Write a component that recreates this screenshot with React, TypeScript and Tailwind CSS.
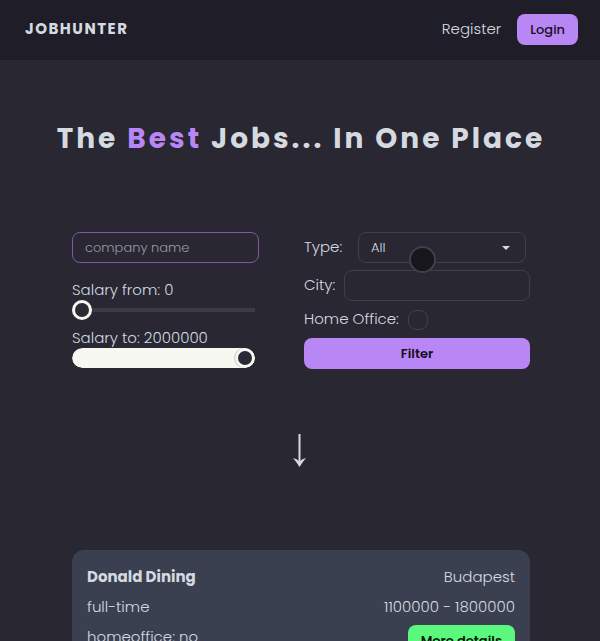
import { useState } from "react";

const field =
  "h-[31px] rounded-lg border bg-transparent px-3 font-light outline-none";

const range =
  "block h-5 w-full appearance-none rounded-full bg-transparent outline-none [&::-webkit-slider-thumb]:box-border [&::-webkit-slider-thumb]:size-5 [&::-webkit-slider-thumb]:appearance-none [&::-webkit-slider-thumb]:rounded-full [&::-webkit-slider-thumb]:border-3 [&::-webkit-slider-thumb]:border-[#f8f8f2] [&::-webkit-slider-thumb]:bg-[#282a36]";

const slimTrack =
  "[&::-webkit-slider-runnable-track]:h-1 [&::-webkit-slider-runnable-track]:bg-[#3b3a45] [&::-webkit-slider-thumb]:-mt-2";

const fullTrack =
  "overflow-hidden [&::-webkit-slider-runnable-track]:h-5 [&::-webkit-slider-runnable-track]:rounded-full [&::-webkit-slider-runnable-track]:bg-[#f8f8f2] [&::-webkit-slider-thumb]:shadow-[-1px_0_0_0_#c4c5c6]";

const MAX = 2000000;

function Header() {
  return (
    <header className="flex h-[60px] items-center justify-between bg-[#1f1e28] pr-[22px] pb-px pl-[25px]">
      <a href="#home" className="font-bold tracking-widest">
        JOBHUNTER
      </a>
      <nav className="flex items-center gap-4">
        <a href="#register" className="font-light">
          Register
        </a>
        <button className="h-[31px] rounded-lg bg-[#b987f5] px-[13px] text-[13px] font-medium text-[#160f1e]">
          Login
        </button>
      </nav>
    </header>
  );
}

function Filters() {
  const [from, setFrom] = useState(0);
  const [to, setTo] = useState(MAX);

  return (
    <form
      className="flex justify-between font-light"
      onSubmit={(e) => e.preventDefault()}
    >
      <div className="w-[187px]">
        <input
          type="text"
          aria-label="company name"
          placeholder="company name"
          className={`${field} block w-full border-[#7e58a8] text-[13px] placeholder:text-[#9a9ca7]`}
        />
        <div className="mt-4 w-[183px]">
          <label htmlFor="from" className="block leading-[21px]">
            Salary from: {from}
          </label>
          <input
            id="from"
            type="range"
            min={0}
            max={MAX}
            value={from}
            onChange={(e) => setFrom(Number(e.target.value))}
            className={`${range} ${slimTrack}`}
          />
          <label htmlFor="to" className="mt-[7px] block leading-[21px]">
            Salary to: {to}
          </label>
          <input
            id="to"
            type="range"
            min={0}
            max={MAX}
            value={to}
            onChange={(e) => setTo(Number(e.target.value))}
            className={`${range} ${fullTrack}`}
          />
        </div>
      </div>

      <div className="flex w-[226px] flex-col">
        <div className="flex items-center justify-between pr-1">
          <label htmlFor="type">Type:</label>
          <div className="relative">
            <select
              id="type"
              className={`${field} block w-[168px] appearance-none border-[#403f4b] text-[13px]`}
            >
              <option>All</option>
            </select>
            <svg
              viewBox="0 0 8 4"
              className="pointer-events-none absolute top-3.5 right-4 h-1 w-2 fill-current"
            >
              <path d="M0 0h8L4 4z" />
            </svg>
            <span className="pointer-events-none absolute top-3.5 left-[51px] size-[27px] rounded-full border-2 border-[#403f4a] bg-[#17161c]" />
          </div>
        </div>
        <div className="mt-[7px] flex items-center justify-between">
          <label htmlFor="city">City:</label>
          <input
            id="city"
            type="text"
            className={`${field} w-[186px] border-[#403f4b] text-[13px]`}
          />
        </div>
        <div className="mt-[7px] flex h-[23px] items-center gap-[9px]">
          <label htmlFor="office">Home Office:</label>
          <input
            id="office"
            type="checkbox"
            className="size-5 appearance-none rounded-lg border border-[#403f4b] checked:bg-[#b987f5]"
          />
        </div>
        <button className="mt-[7px] h-[31px] rounded-lg bg-[#b987f5] text-[13px] font-semibold text-[#160f1e]">
          Filter
        </button>
      </div>
    </form>
  );
}

function JobCard() {
  return (
    <article className="rounded-xl bg-[#3a4050] px-[15px] pt-[15px] pb-4 font-light">
      <div className="flex h-6 items-center justify-between">
        <h2 className="font-bold">Donald Dining</h2>
        <p>Budapest</p>
      </div>
      <div className="mt-[6px] flex h-6 items-center justify-between">
        <p>full-time</p>
        <p>1100000 - 1800000</p>
      </div>
      <div className="mt-[6px] flex items-start justify-between">
        <p className="leading-6">homeoffice: no</p>
        <button className="h-[31px] rounded-lg bg-[#5af97d] px-[13px] text-[13px] font-semibold text-[#07150b]">
          More details
        </button>
      </div>
    </article>
  );
}

export default function App() {
  return (
    <div className="h-screen overflow-hidden bg-[#282732] font-[Poppins,Inter,sans-serif] text-[15px] text-[#d5dae1]">
      <Header />
      <main className="pr-[70px] pl-[72px]">
        <h1 className="-mx-12 pt-[61px] text-center text-[28px] leading-9 font-bold tracking-[3px] whitespace-nowrap">
          The <span className="text-[#b987f5]">Best</span> Jobs... In One Place
        </h1>
        <div className="pt-[75px]">
          <Filters />
        </div>
        <svg
          viewBox="0 0 16 33"
          className="mx-auto mt-[65px] block h-[33px] w-4"
        >
          <path d="M6.500 0v29" fill="none" stroke="currentColor" strokeWidth="2" />
          <path d="M0 24Q4 24.500 6.500 27.500Q9 24.500 13 24Q9.500 28 6.500 33Q3.500 28 0 24z" fill="currentColor" />
        </svg>
        <div className="mt-[83px]">
          <JobCard />
        </div>
      </main>
    </div>
  );
}
